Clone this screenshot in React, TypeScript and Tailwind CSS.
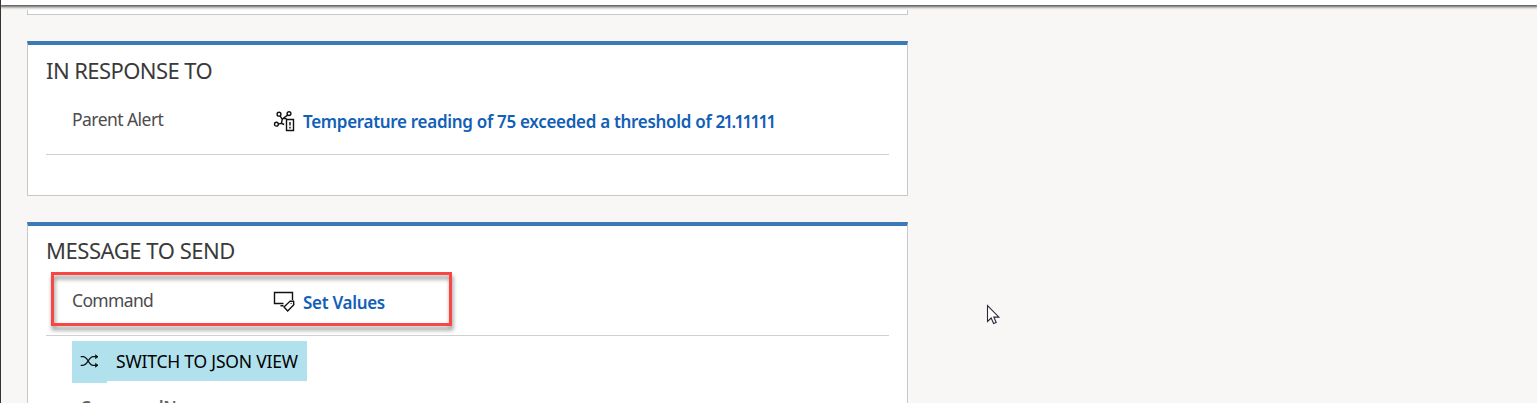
import type { ReactNode } from "react";

function AlertIcon() {
  return (
    <svg className="mt-0.5 size-[22px] shrink-0" viewBox="0 0 22 22" fill="none" stroke="#111" strokeWidth="1.4">
      <circle cx="6" cy="4.2" r="1.9" />
      <circle cx="16" cy="3.6" r="1.9" />
      <circle cx="3.4" cy="14.2" r="1.9" />
      <path d="M7.1 6l2 3.2M14.6 5.1L9.4 9M9.3 9l-.8 4.3L5.4 14.1M9.7 8.6h4M8.4 13.3l2.8 1.2" />
      <path d="M13.5 9.5h7v11h-7z" />
      <path d="M17 12v3.6M17 16.8v1.6" />
    </svg>
  );
}

function CommandIcon() {
  return (
    <svg className="mt-0.5 size-[22px] shrink-0" viewBox="0 0 22 22" fill="none" stroke="#111" strokeWidth="1.4">
      <path d="M19.5 9V1.5h-18v11h9M7.5 14.7h3" />
      <path d="M11 16.1l6.1-6 3.5.1.2 3.6-6.1 6.1z" />
      <path d="M18.2 12.2v.9" />
    </svg>
  );
}

function ShuffleIcon() {
  return (
    <svg className="h-3.5 w-[19px]" viewBox="0 0 19 14" fill="none" stroke="#111" strokeWidth="1.2">
      <path d="M.7 2.7H3c5 0 5.4 8.6 10.2 8.6H18M.7 11.3H3c5 0 5.4-8.6 10.2-8.6H18" />
      <path d="M15.5.7l2.5 2-2.5 2zM15.5 9.3l2.5 2-2.5 2z" fill="#111" strokeWidth=".6" />
    </svg>
  );
}

function Row({ label, icon, children, labelClass, linkClass }: { label: string; icon: ReactNode; children: ReactNode; labelClass: string; linkClass: string }) {
  return (
    <div className="flex h-6 items-center pl-[26px] text-[17px] leading-6 whitespace-nowrap">
      <div className={`w-[201px] shrink-0 pb-0.5 text-[17.5px] text-[#4c4c4c] ${labelClass}`}>{label}</div>
      {icon}
      <a className={`relative top-0.5 ml-2 font-semibold text-[#1160b7] ${linkClass}`}>{children}</a>
    </div>
  );
}

export default function App() {
  return (
    <div className="relative h-[403px] w-full overflow-hidden border-l border-[#333] bg-[#f8f7f5] font-['Noto_Sans','Open_Sans',sans-serif]">
      <header className="relative h-[5px] bg-white shadow-[0_1px_3px_1px_#555]" />
      <main className="ml-[26px] w-[881px]">
        <div className="mt-[5px] h-[5px] border border-t-0 border-[#c8c8c8] bg-white" />
        <section className="mt-[26px] h-[155px] border border-t-4 border-[#c8c8c8] border-t-[#3b79b7] bg-white px-[18px] pt-[10px]">
          <h2 className="h-[30px] text-[22px] leading-[30px] tracking-[-0.58px] whitespace-nowrap text-[#3a3a3a]">IN RESPONSE TO</h2>
          <div className="mt-[23px]">
            <Row label="Parent Alert" icon={<AlertIcon />} labelClass="tracking-[-0.55px]" linkClass="tracking-[-0.3px]">
              Temperature reading of 75 exceeded a threshold of <span className="tracking-[-1.75px]">21.11111</span>
            </Row>
          </div>
          <div className="mt-[22px] h-px bg-[#d0d0d0]" />
        </section>
        <section className="mt-[26px] h-[200px] border border-t-4 border-[#c8c8c8] border-t-[#3b79b7] bg-white px-[18px] pt-[9px]">
          <h2 className="h-[30px] text-[22px] leading-[30px] tracking-[-0.45px] whitespace-nowrap text-[#3a3a3a]">MESSAGE TO SEND</h2>
          <div className="mt-[24px]">
            <Row label="Command" icon={<CommandIcon />} labelClass="tracking-[-0.65px]" linkClass="tracking-[-0.3px]">
              Set Values
            </Row>
          </div>
          <div className="mt-[22px] h-px bg-[#d0d0d0]" />
          <div className="ml-[26px] flex pt-[5px]">
            <div className="flex h-[42px] w-[35px] items-center justify-center bg-[#b1e1ec] pb-0.5"><ShuffleIcon /></div>
            <button className="h-10 w-[200px] bg-[#b1e1ec] pl-[9px] text-left text-[17.5px] tracking-[-0.2px] whitespace-nowrap text-black">SWITCH TO JSON VIEW</button>
          </div>
          <div className="mt-[13px] ml-[34px] text-[17px] leading-6 font-semibold tracking-[-0.3px] text-[#666]">CommandName</div>
        </section>
      </main>
      <div className="absolute top-[272px] left-[50px] h-[54px] w-[401px] border-3 border-[#fa4545] drop-shadow-[1px_4px_2px_rgba(0,0,0,0.45)]" />
      <svg className="absolute top-[304px] left-[985px] h-[22px] w-4" viewBox="0 0 16 22" fill="white" stroke="#29293a" strokeWidth="1.1">
        <path d="M1.5 1.5v16l3.7-3.5 2.4 5.5 2.6-1.1-2.4-5.3h5.1z" />
      </svg>
    </div>
  );
}
